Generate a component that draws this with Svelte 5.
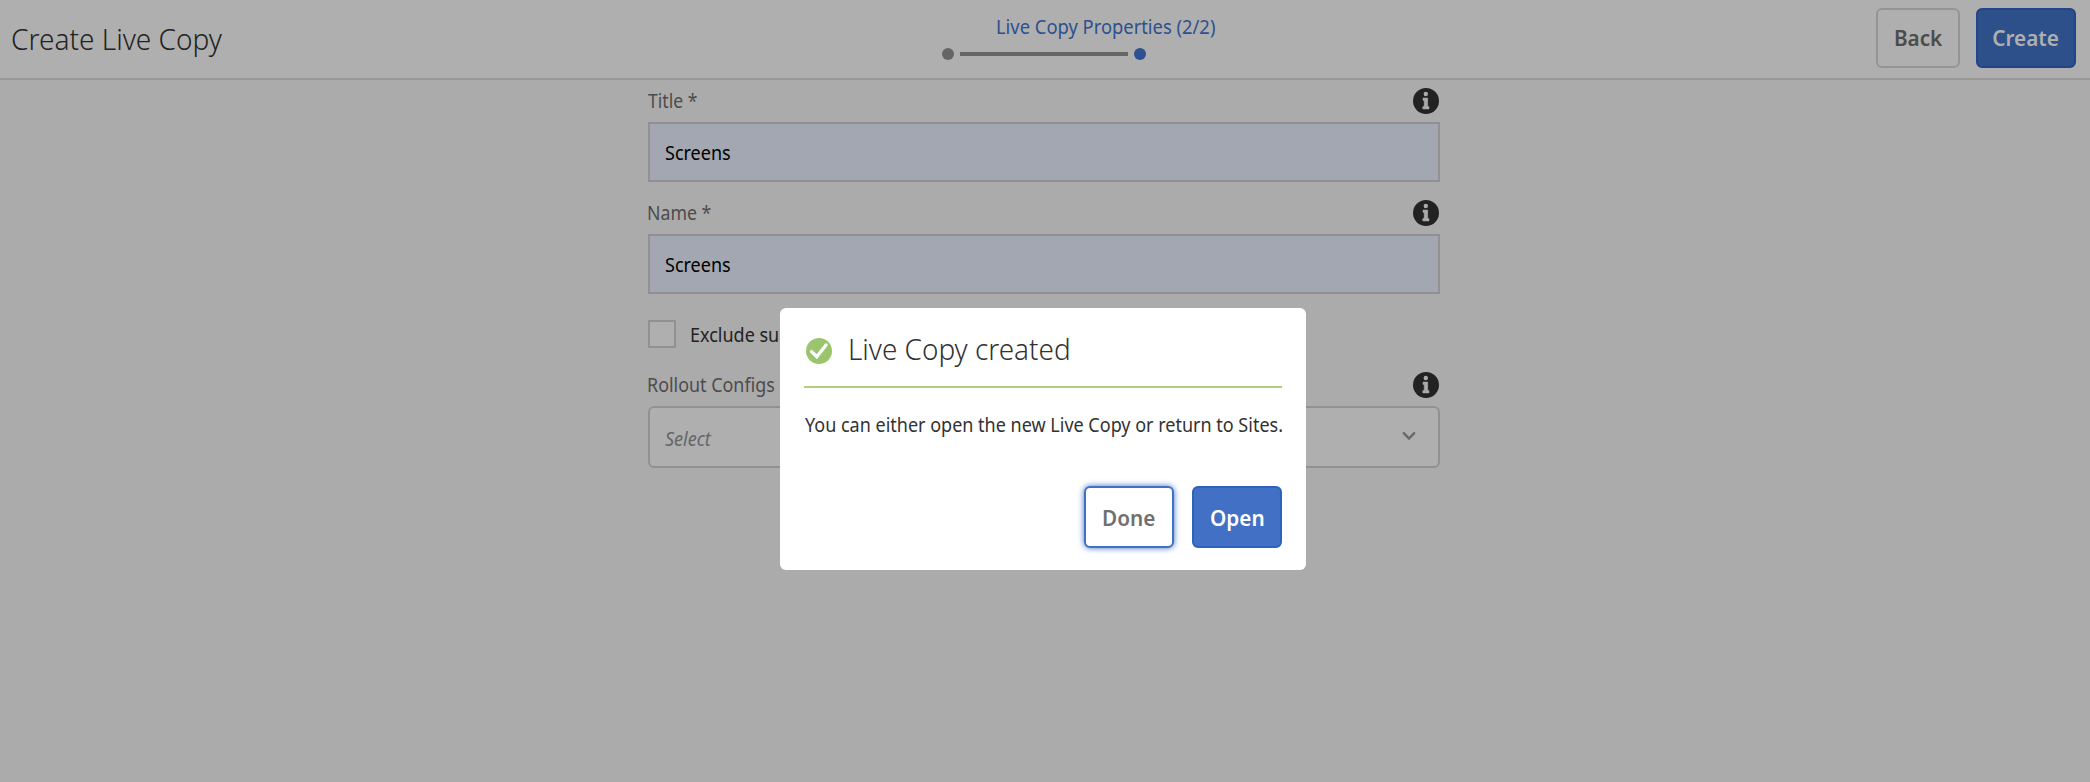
<script>
  const fields = [
    { label: 'Title *', value: 'Screens', cls: 'title-label' },
    { label: 'Name *', value: 'Screens', cls: 'name-label' }
  ];
</script>

{#snippet info()}
  <svg class="info" viewBox="0 0 26 26" aria-hidden="true">
    <circle cx="13" cy="13" r="13" fill="#222" />
    <circle cx="12.8" cy="6" r="2.2" fill="#ababab" />
    <path d="M10 10h4.7v8.6H16V21H9.8v-2.4h1.4v-6.2H10z" fill="#ababab" stroke="#ababab" stroke-width=".5" stroke-linejoin="round" />
  </svg>
{/snippet}

<div class="page">
  <header>
    <h1>Create Live Copy</h1>
    <nav>
      <span class="step-label">Live Copy Properties (2/2)</span>
      <div class="steps">
        <i class="dot"></i>
        <i class="line"></i>
        <i class="dot active"></i>
      </div>
    </nav>
    <div class="actions">
      <button class="back"><span>Back</span></button>
      <button class="create"><span>Create</span></button>
    </div>
  </header>

  <main>
    {#each fields as f}
      <div class="field">
        <div class="row"><span class={f.cls}>{f.label}</span>{@render info()}</div>
        <div class="input"><span>{f.value}</span></div>
      </div>
    {/each}
    <div class="check"><i class="box"></i><span>Exclude subpages</span></div>
    <div class="row"><span class="rollout">Rollout Configs</span>{@render info()}</div>
    <div class="select">
      <em>Select</em>
      <svg viewBox="0 0 14 10" width="14" height="10" aria-hidden="true">
        <path d="M1.8 2.2 7 7.5l5.200-5.300" fill="none" stroke="#686868" stroke-width="2.4" stroke-linecap="round" />
      </svg>
    </div>
  </main>

  <section class="dialog">
    <div class="heading">
      <svg viewBox="0 0 26 26" width="26" height="26" aria-hidden="true">
        <circle cx="13" cy="13" r="13" fill="#9ac56c" />
        <path d="M5.500 13.600 10.800 18.800 20 7" fill="none" stroke="#fff" stroke-width="3.300" stroke-linecap="round" stroke-linejoin="miter" />
      </svg>
      <h2>Live Copy created</h2>
    </div>
    <p>You can either open the new Live Copy or return to Sites.</p>
    <div class="buttons">
      <button class="done"><span>Done</span></button>
      <button class="open"><span>Open</span></button>
    </div>
  </section>
</div>

<style>
  :global(body) { background: #ababab; }
  .page {
    position: relative;
    box-sizing: border-box;
    height: 782px;
    overflow: hidden;
    background: #ababab;
    font: 400 20px/24px "Noto Sans", sans-serif;
    color: #222;
  }
  .page * { box-sizing: border-box; }
  span, h1, h2, p, em { display: block; white-space: nowrap; transform-origin: 0 50%; }
  h1, h2, p { margin: 0; }
  h1, h2 { font-size: 30px; line-height: 40px; font-weight: 300; }

  header {
    display: grid;
    grid-template-columns: 942px 204px 1fr;
    height: 80px;
    background: #afafaf;
    border-bottom: 2px solid #989898;
  }
  h1 { margin: 19px 0 0 11px; transform: scaleX(.934); }
  nav { padding-top: 15px; }
  .step-label { margin-left: 54px; color: #2c5090; transform: scaleX(.918); }
  .steps { display: flex; align-items: center; justify-content: space-between; margin-top: 9px; }
  .dot { width: 12px; height: 12px; border-radius: 50%; background: #666; }
  .dot.active { background: #2c5090; }
  .line { width: 168px; height: 4px; background: #666; }
  .actions { display: flex; justify-content: flex-end; gap: 16px; padding: 8px 14px 0 0; }

  button {
    display: flex;
    align-items: center;
    justify-content: center;
    padding: 0;
    border: 2px solid;
    border-radius: 6px;
    font: 600 21.5px/26px "Noto Sans", sans-serif;
  }
  button span { transform-origin: 50% 50%; transform: scaleX(.965); }
  .back { width: 84px; height: 60px; background: #afafaf; border-color: #949494; color: #4c4c4c; }
  .create { width: 100px; height: 60px; background: #2d4f8a; border-color: #234488; color: #afafaf; }

  main { width: 792px; margin-left: 648px; padding-top: 8px; }
  .field { margin-bottom: 18px; }
  .row { display: flex; justify-content: space-between; align-items: flex-start; height: 26px; margin-bottom: 8px; color: #4c4c4c; }
  .row span { margin-top: 1px; }
  .info { width: 26px; height: 26px; margin-right: 1px; }
  .title-label { margin-left: -.5px; transform: scaleX(.88); }
  .name-label { margin-left: -1px; transform: scaleX(.885); }
  .rollout { margin-left: -1px; transform: scaleX(.895); }
  .input {
    display: flex;
    align-items: center;
    height: 60px;
    padding: 2px 0 0 14.5px;
    background: #a2a7b1;
    border: 2px solid #919191;
    color: #000;
  }
  .input span { transform: scaleX(.9); }
  .check { display: flex; align-items: center; height: 28px; margin: 26px 0 24px; }
  .box { width: 28px; height: 28px; margin-right: 13.5px; background: #afafaf; border: 2px solid #919191; }
  .check span { padding-top: 2px; transform: scaleX(.9); }
  .select {
    display: flex;
    align-items: center;
    justify-content: space-between;
    height: 62px;
    padding: 0 22px 0 14.5px;
    background: #afafaf;
    border: 2px solid #919191;
    border-radius: 6px;
    color: #666;
  }
  .select svg { margin-bottom: 2px; }
  .select em { padding-top: 3px; transform: scaleX(.9); }

  .dialog {
    position: absolute;
    left: 780px;
    top: 308px;
    width: 526px;
    height: 262px;
    padding: 20px 24px 0;
    background: #fff;
    border-radius: 6px;
    color: #323232;
  }
  .heading { display: flex; height: 60px; border-bottom: 2px solid #afcf7c; }
  .heading svg { flex: none; margin: 10px 15.5px 0 2px; }
  h2 { margin-top: 1px; transform: scaleX(.93); }
  .dialog p { margin: 25px 0 0 .5px; transform: scaleX(.9); }
  .buttons { display: flex; justify-content: flex-end; gap: 18px; margin-top: 49px; }
  .buttons button { width: 90px; height: 62px; padding-top: 1px; }
  .done { background: #fff; border-color: #4270c4; color: #707070; box-shadow: 0 0 6px #4270c4; }
  .open { background: #4270c4; border-color: #2f62bd; color: #fff; }
</style>
